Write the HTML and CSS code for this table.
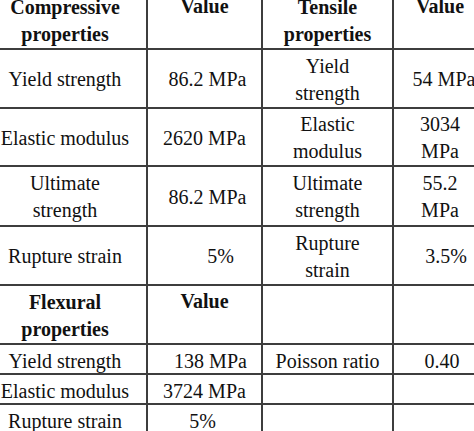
FILE: index.html
```html
<!DOCTYPE html>
<html>
<head>
<meta charset="utf-8">
<title>Material properties</title>
<link rel="stylesheet" href="styles.css">
</head>
<body>
<table class="props">
  <colgroup>
    <col class="c1"><col class="c2"><col class="c3"><col class="c4">
  </colgroup>
  <tr class="tall">
    <th>Compressive<br>properties</th>
    <th class="top">Value</th>
    <th>Tensile<br>properties</th>
    <th class="top">Value</th>
  </tr>
  <tr class="tall">
    <td>Yield strength</td>
    <td class="r3">86.2 MPa</td>
    <td>Yield<br>strength</td>
    <td class="r4">54 MPa</td>
  </tr>
  <tr class="tall r58">
    <td>Elastic modulus</td>
    <td>2620 MPa</td>
    <td>Elastic<br>modulus</td>
    <td>3034<br>MPa</td>
  </tr>
  <tr class="tall r60">
    <td>Ultimate<br>strength</td>
    <td class="r3">86.2 MPa</td>
    <td>Ultimate<br>strength</td>
    <td>55.2<br>MPa</td>
  </tr>
  <tr class="tall">
    <td>Rupture strain</td>
    <td class="r16">5%</td>
    <td>Rupture<br>strain</td>
    <td class="r6">3.5%</td>
  </tr>
  <tr class="tall">
    <th>Flexural<br>properties</th>
    <th class="top">Value</th>
    <td></td>
    <td></td>
  </tr>
  <tr class="short">
    <td>Yield strength</td>
    <td class="r6">138 MPa</td>
    <td>Poisson ratio</td>
    <td class="r2">0.40</td>
  </tr>
  <tr class="short">
    <td>Elastic modulus</td>
    <td>3724 MPa</td>
    <td></td>
    <td></td>
  </tr>
  <tr class="short">
    <td>Rupture strain</td>
    <td class="l2">5%</td>
    <td></td>
    <td></td>
  </tr>
</table>
</body>
</html>
```

FILE: styles.css
```css
html, body {
  margin: 0;
  padding: 0;
  overflow: hidden;
  background: #ffffff;
}

body {
  width: 474px;
  height: 431px;
}

.props {
  border-collapse: collapse;
  table-layout: fixed;
  width: 504px;
  margin: -11px 0 0 -18px;
  font-family: "Liberation Serif", "Times New Roman", serif;
  font-size: 20px;
  color: #111111;
}

.c1 { width: 164px; }
.c2 { width: 115px; }
.c3 { width: 131px; }
.c4 { width: 94px; }

.props td,
.props th {
  border: 2px solid #3d3d3d;
  padding: 2px 0 0 0;
  text-align: center;
  vertical-align: middle;
  line-height: 27px;
  white-space: nowrap;
  font-weight: normal;
}

.props th {
  font-weight: bold;
}

.props th.top {
  vertical-align: top;
}

.tall { height: 59px; }
.tall.r58 { height: 58px; }
.tall.r60 { height: 60px; }

.short { height: 30px; }

.props .short td {
  line-height: 24px;
  padding-top: 4px;
}

.props .r2 { padding-left: 4px; }
.props .r3 { padding-left: 6px; }
.props .r4 { padding-left: 8px; }
.props .r6 { padding-left: 12px; }
.props .r16 { padding-left: 32px; }
.props .l2 { padding-right: 4px; }
```
